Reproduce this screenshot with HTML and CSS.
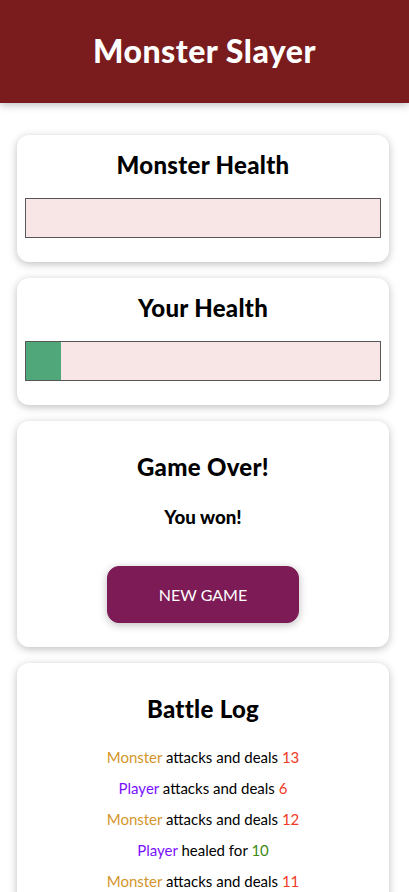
FILE: index.html
```html
<!DOCTYPE html>
<html lang="en">
<head>
<meta charset="utf-8">
<title>Monster Slayer</title>
<link rel="stylesheet" href="styles.css">
</head>
<body>
<header class="header">
  <h1 class="title">Monster Slayer</h1>
</header>
<div class="game">
  <section class="card">
    <h2 class="card-title compact">Monster Health</h2>
    <div class="healthbar"><div class="healthbar-value" style="width: 0%"></div></div>
  </section>
  <section class="card">
    <h2 class="card-title compact">Your Health</h2>
    <div class="healthbar"><div class="healthbar-value" style="width: 10%"></div></div>
  </section>
  <section class="card">
    <h2 class="card-title">Game Over!</h2>
    <h3 class="result">You won!</h3>
    <button class="btn">NEW GAME</button>
  </section>
  <section class="card">
    <h2 class="card-title">Battle Log</h2>
    <ul class="log">
      <li><span class="log-monster">Monster</span> attacks and deals <span class="log-damage">13</span></li>
      <li><span class="log-player">Player</span> attacks and deals <span class="log-damage">6</span></li>
      <li><span class="log-monster">Monster</span> attacks and deals <span class="log-damage">12</span></li>
      <li><span class="log-player">Player</span> healed for <span class="log-heal">10</span></li>
      <li><span class="log-monster">Monster</span> attacks and deals <span class="log-damage">11</span></li>
      <li><span class="log-player">Player</span> attacks and deals <span class="log-damage">9</span></li>
    </ul>
  </section>
</div>
</body>
</html>
```
FILE: styles.css
```css
* { box-sizing: border-box; }
html { font-family: "Lato", "Noto Sans", sans-serif; }
body { margin: 0; background: #fff; color: #000; }

.header {
  background: #7a1c1d;
  color: #fff;
  text-align: center;
  padding: 8px 0;
  margin-bottom: 32px;
  box-shadow: 0 2px 8px rgba(0, 0, 0, 0.26);
}
.title {
  margin: 20px 0 22px;
  font-size: 32px;
  line-height: 45px;
  font-weight: 900;
  letter-spacing: 0.5px;
}

.game {
  padding: 0 20px 0 17px;
}
.card {
  text-align: center;
  padding: 8px;
  margin: 16px 0;
  border-radius: 12px;
  box-shadow: 0 2px 8px rgba(0, 0, 0, 0.26);
  background: #fff;
}
.card-title {
  font-size: 24px;
  line-height: 35px;
  font-weight: 900;
  letter-spacing: 0.3px;
  margin: 20px 0;
}
.card-title.compact { margin: 4px; }

.healthbar {
  height: 40px;
  border: 1px solid #575757;
  margin: 16px 0;
  background: #f8e6e6;
}
.healthbar-value {
  height: 100%;
  background: #4fa77a;
}

.result {
  font-size: 18.72px;
  line-height: 27px;
  font-weight: 900;
  margin: 18.72px 0;
}
.btn {
  font: inherit;
  font-size: 16px;
  line-height: 23px;
  border: 1px solid #7d1b56;
  background: #7d1b56;
  color: #fff;
  padding: 16px 32px;
  border-radius: 12px;
  margin: 16px;
  width: 192px;
  box-shadow: 0 2px 8px rgba(0, 0, 0, 0.26);
}

.log {
  list-style: none;
  margin: 0;
  padding: 0;
}
.log li {
  margin: 8px 0;
  font-size: 15px;
  line-height: 23px;
}
.log-monster { color: #d4952c; }
.log-player { color: #7a10ff; }
.log-damage { color: #ef3b24; }
.log-heal { color: #3f8a14; }
```
